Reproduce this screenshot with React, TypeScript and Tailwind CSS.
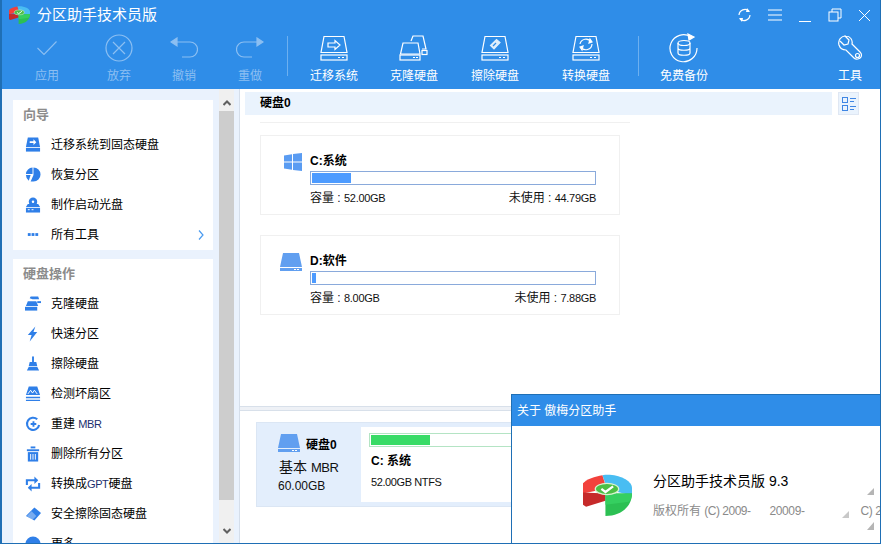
import type { ReactNode } from 'react';

function Drive({ children }: { children?: ReactNode }) {
  return (
    <svg width="28" height="26" viewBox="0 0 28 26" fill="none" stroke="currentColor" strokeWidth="1.2">
      <path d="M4 1.500h20l3 16H1z" />
      <rect x="1" y="20" width="26" height="5" />
      <path d="M18 22.500h2M22 22.500h2" />
      {children}
    </svg>
  );
}

function AppLogo({ size }: { size: number }) {
  return (
    <svg className="shrink-0" width={size} height={size * 0.86} viewBox="0 0 48 41">
      <path d="M19 1C32-1 47 5 48 13v8L24 15z" fill="#49bdf2" />
      <path d="M0 9C3 5 12 2 19 1l4 13L0 19z" fill="#f2413c" />
      <path d="M0 18l22 1v7L3 32l-3-2z" fill="#c62a2a" />
      <path d="M22 19h26c0 12-10 22-26 22z" fill="#2cc053" />
      <path d="M22 19h26c0 3-1 6-3 8l-23 3z" fill="#35cf60" />
      <ellipse cx="23.500" cy="14.500" rx="11.500" ry="5.500" fill="#4cbf45" stroke="#d9f3d0" strokeWidth="1.200" />
      <path d="M18 14.500l4 3 7.500-5.500" fill="none" stroke="#fff" strokeWidth="2.200" />
    </svg>
  );
}

const check = <svg width="20" height="14" viewBox="0 0 20 14" fill="none" stroke="currentColor" strokeWidth="1.1"><path d="M0.500 7l6.500 6.500L19.500 0.500" /></svg>;
const discard = (
  <svg width="28" height="28" viewBox="0 0 28 28" fill="none" stroke="currentColor" strokeWidth="1.2">
    <circle cx="14" cy="14" r="13" />
    <path d="M8 8l12 12M20 8L8 20" />
  </svg>
);
const undo = (
  <svg width="28" height="22" viewBox="0 0 28 22" fill="none" stroke="currentColor" strokeWidth="1.2">
    <path d="M6 5h14a7.500 7.500 0 0 1 0 15H12" />
    <path d="M1 5l6-4v8z" fill="currentColor" />
  </svg>
);
const redo = (
  <svg width="28" height="22" viewBox="0 0 28 22" fill="none" stroke="currentColor" strokeWidth="1.2">
    <path d="M22 5H8a7.500 7.500 0 0 0 0 15h8" />
    <path d="M27 5l-6-4v8z" fill="currentColor" />
  </svg>
);
const migrate = <Drive><path d="M8 8h7V5.500l5 4.500-5 4.500V12H8z" /></Drive>;
const clone = (
  <svg width="30" height="26" viewBox="0 0 30 26" fill="none" stroke="currentColor" strokeWidth="1.2">
    <path d="M12 6l2-5h10l3 13h-4" />
    <path d="M4 8h15l2 11H1.500z" />
    <rect x="1" y="20" width="20" height="5" />
    <path d="M14 22.500h2M17 22.500h2" />
    <rect x="23" y="15.500" width="5" height="4" />
  </svg>
);
const wipe = (
  <Drive>
    <path d="M9.500 10.500l6-6 3.500 3-6 6.500z" fill="currentColor" opacity=".85" />
    <path d="M12 11l3-3" stroke="#2f8de8" />
  </Drive>
);
const convert = (
  <Drive>
    <path d="M8 9a6 6 0 0 1 11-2M20 9a6 6 0 0 1-11 3" />
    <path d="M18 4l2 3-3 1zM10 15l-2-3 3-1z" fill="currentColor" />
  </Drive>
);
const backup = (
  <svg width="30" height="30" viewBox="0 0 30 30" fill="none" stroke="currentColor" strokeWidth="1.2">
    <path d="M22 4A13.500 13.500 0 1 0 28 15" />
    <path d="M19 1l6 3-5 3z" fill="currentColor" />
    <ellipse cx="15" cy="10" rx="6" ry="2.500" />
    <path d="M9 10v10c0 3 12 3 12 0V10M9 15c0 3 12 3 12 0" />
  </svg>
);
const tools = (
  <svg width="26" height="26" viewBox="0 0 26 26" fill="none" stroke="currentColor" strokeWidth="1.2">
    <path d="M9 1a7 7 0 0 0-7 9c1 3 4 5 7 5l8 8c2 2 6 1 7-1 1-2 0-4-1-5l-8-8c1-4-2-8-6-8l-1 0 4 4-1 4-4 1-4-4" />
    <circle cx="20.500" cy="20.500" r="2" />
  </svg>
);

function ToolItem({ icon, label, off, className }: { icon: ReactNode; label: string; off?: boolean; className: string }) {
  return (
    <div className={`flex h-[50px] w-[60px] flex-col items-center justify-between ${off ? 'text-[#8cbff2]' : 'text-white'} ${className}`}>
      <div className="flex h-[30px] items-center">{icon}</div>
      <span className="text-xs leading-[14px] whitespace-nowrap">{label}</span>
    </div>
  );
}

const s = { width: 17, height: 16, viewBox: '0 0 17 16', fill: '#2f7fe8' };
const sideIcons: Record<string, ReactNode> = {
  migrate: <svg {...s}><path d="M3 0h11l2 10H1z" /><rect x="1" y="11" width="15" height="4" /><path d="M5 4h4V2l3 3-3 3V6H5z" fill="#fff" /></svg>,
  restore: <svg {...s}><path d="M9 0a7.500 7.500 0 0 1 0 15H6l3-7z" /><path d="M8 0v7H1a7.500 7.500 0 0 1 7-7zM1 8h5l-2 6a7.500 7.500 0 0 1-3-6z" /></svg>,
  boot: <svg {...s}><circle cx="8.500" cy="4.500" r="4.500" /><circle cx="8.500" cy="4.500" r="1.300" fill="#fff" /><path d="M3 7h11l2 3H1z" /><rect x="1" y="11" width="15" height="5" /><path d="M3 13h2M7 13h2" stroke="#fff" /></svg>,
  dots: <svg {...s}><rect x="3" y="6" width="3" height="3" /><rect x="7" y="6" width="3" height="3" /><rect x="11" y="6" width="3" height="3" /></svg>,
  clone: <svg {...s}><path d="M5 2l1-2h8l1 3H8zM3 5h9l2 5H1z" /><rect x="0" y="11" width="13" height="4" /><rect x="13" y="5" width="4" height="2" /></svg>,
  quick: <svg {...s}><path d="M11 0L3 9h4l-2 7 8-10H9z" /></svg>,
  wipe: <svg {...s}><rect x="7.500" y="0" width="2" height="6" /><path d="M5 6h7l1 4H4zM4 11h9l2 4H2z" /></svg>,
  check: <svg {...s}><path d="M4 0h9l3 9H1zM1 11h15v1.500H1zM1 14h15v1.500H1z" /><path d="M3 8l3-4 2 3 2-3 3 4" fill="none" stroke="#fff" /></svg>,
  rebuild: <svg {...s} fill="none" stroke="#2f7fe8" strokeWidth="2.200"><path d="M13 3A6.500 6.500 0 1 0 15 9" /><path d="M6 8h6M9 5v6" strokeWidth="2" /></svg>,
  trash: <svg {...s}><rect x="2" y="3" width="13" height="2" /><rect x="6" y="0" width="5" height="2" /><path d="M3 6h11v10H3z" /><path d="M6 8v6M8.500 8v6M11 8v6" stroke="#fff" /></svg>,
  gpt: <svg {...s} fill="none" stroke="#2f7fe8" strokeWidth="2.200"><path d="M2 9V4h11M15 7v5H4" /><path d="M10 0l4 4-4 4zM7 8l-4 4 4 4z" fill="#2f7fe8" stroke="none" /></svg>,
  erase: <svg {...s}><path d="M10 1l7 6-7 8-9-5z" /><path d="M2 10l5-5 5 5-4 4z" fill="#fff" opacity=".35" /></svg>,
  more: <svg {...s}><circle cx="8.500" cy="8" r="8" /></svg>,
};

function SideRow({ icon, children, arrow }: { icon: string; children: ReactNode; arrow?: boolean }) {
  return (
    <div className="flex h-[30px] items-center pl-3 text-xs text-black">
      <span className="flex w-4 shrink-0 justify-center">{sideIcons[icon]}</span>
      <span className="ml-[10px] whitespace-nowrap">{children}</span>
      {arrow && (
        <svg className="mr-[9px] ml-auto" width="6" height="10" viewBox="0 0 6 10" fill="none" stroke="#4a9bf0" strokeWidth="1.200">
          <path d="M1 0.500L5 5 1 9.500" />
        </svg>
      )}
    </div>
  );
}

function SectionTitle({ children }: { children: string }) {
  return <div className="flex h-[30px] items-center pl-[10px] text-[13px] font-bold text-[#8c8c8c]">{children}</div>;
}

function Latin({ children }: { children: string }) {
  return <span className="text-[11px] tracking-[-0.3px]">{children}</span>;
}

const winIcon = (
  <svg width="18" height="18" viewBox="0 0 18 18" fill="#5a9cf2">
    <path d="M0 2.500l8-1.200v7.200H0zM9 1.100L18 0v8.500H9zM0 9.500h8v7.200l-8-1.200zM9 9.500h9V18l-9-1.100z" />
  </svg>
);
const driveIcon = (
  <svg width="22" height="18" viewBox="0 0 22 18" fill="#619ff0">
    <path d="M3 0h16l3 14H0z" />
    <rect y="15" width="22" height="3" />
    <path d="M14 16.500h2M17 16.500h2" stroke="#fff" />
  </svg>
);

function DiskCard({ icon, name, cap, free, pct }: { icon: ReactNode; name: string; cap: string; free: string; pct: string }) {
  return (
    <div className="flex h-[80px] w-[360px] border border-[#f0f0f0]">
      <div className="flex w-[49px] shrink-0 justify-end pt-[17px] pr-[8px]">{icon}</div>
      <div className="w-[286px] pt-[17px]">
        <div className="text-xs leading-[16px] font-bold text-black">{name}</div>
        <div className="mt-[2px] h-[14px] border border-[#8aaadb] p-[1px]">
          <div className={`h-full bg-[#4d9bff] ${pct}`} />
        </div>
        <div className="mt-[6px] flex justify-between text-xs leading-[14px] text-[#111]">
          <span>容量 : <Latin>{cap}</Latin></span>
          <span>未使用 : <Latin>{free}</Latin></span>
        </div>
      </div>
    </div>
  );
}

export default function App() {
  return (
    <div className="relative h-[544px] w-[881px] overflow-hidden border-r border-b border-l-2 border-[#1f6fb5] bg-white font-['Liberation_Sans','Noto_Sans_CJK_SC',sans-serif]">
      {/* 顶部标题和工具栏 */}
      <div className="h-[89px] bg-[#2f8de8]">
        <div className="flex h-[30px] items-center pl-[7px] text-white">
          <AppLogo size={21} />
          <span className="ml-[7px] text-[15px]">分区助手技术员版</span>
          <div className="ml-auto flex items-center gap-4 pr-[9px]">
            <svg width="15" height="16" viewBox="0 0 15 16" fill="none" stroke="#fff" strokeWidth="1.200">
              <path d="M2 8a6 6 0 0 1 10-4M13 8a6 6 0 0 1-10 4" />
              <path d="M10 1l3 4-4 0zM5 15l-3-4 4 0z" fill="#fff" stroke="none" />
            </svg>
            <svg width="14" height="12" viewBox="0 0 14 12" stroke="#fff"><path d="M0 1h14M0 6h14M0 11h14" /></svg>
            <svg width="14" height="14" viewBox="0 0 14 14" stroke="#fff"><path d="M1 13.500h12" /></svg>
            <svg width="14" height="14" viewBox="0 0 14 14" fill="none" stroke="#fff"><rect x="1" y="4" width="9" height="9" /><path d="M4 4V1h9v9h-3" /></svg>
            <svg width="13" height="13" viewBox="0 0 13 13" stroke="#fff"><path d="M1 1l11 11M12 1L1 12" /></svg>
          </div>
        </div>
        <div className="flex h-[59px] items-start pt-[3px]">
          <ToolItem off icon={check} label="应用" className="ml-[15px]" />
          <ToolItem off icon={discard} label="放弃" className="ml-3" />
          <ToolItem off icon={undo} label="撤销" className="ml-[5px]" />
          <ToolItem off icon={redo} label="重做" className="ml-[6px]" />
          <div className="mt-[3px] ml-[7px] h-10 w-px bg-[#6db0f0]" />
          <ToolItem icon={migrate} label="迁移系统" className="ml-4" />
          <ToolItem icon={clone} label="克隆硬盘" className="ml-5" />
          <ToolItem icon={wipe} label="擦除硬盘" className="ml-[21px]" />
          <ToolItem icon={convert} label="转换硬盘" className="ml-[31px]" />
          <div className="mt-[3px] ml-[22px] h-10 w-px bg-[#6db0f0]" />
          <ToolItem icon={backup} label="免费备份" className="ml-[15px]" />
          <ToolItem icon={tools} label="工具" className="ml-auto" />
        </div>
      </div>

      <div className="flex h-[454px]">
        {/* 左侧操作栏 */}
        <div className="flex h-full w-[217px] shrink-0 flex-col gap-[9px] overflow-hidden bg-[#eaf2fd] pt-[11px] pl-[11px]">
          <div className="w-[200px] shrink-0 bg-white">
            <SectionTitle>向导</SectionTitle>
            <SideRow icon="migrate">迁移系统到固态硬盘</SideRow>
            <SideRow icon="restore">恢复分区</SideRow>
            <SideRow icon="boot">制作启动光盘</SideRow>
            <SideRow icon="dots" arrow>所有工具</SideRow>
          </div>
          <div className="w-[200px] shrink-0 bg-white">
            <SectionTitle>硬盘操作</SectionTitle>
            <SideRow icon="clone">克隆硬盘</SideRow>
            <SideRow icon="quick">快速分区</SideRow>
            <SideRow icon="wipe">擦除硬盘</SideRow>
            <SideRow icon="check">检测坏扇区</SideRow>
            <SideRow icon="rebuild">重建 <span className="text-[11px] tracking-[-0.4px] text-[#1c2f6e]">MBR</span></SideRow>
            <SideRow icon="trash">删除所有分区</SideRow>
            <SideRow icon="gpt">转换成<span className="text-[11px] tracking-[-0.4px] text-[#1c2f6e]">GPT</span>硬盘</SideRow>
            <SideRow icon="erase">安全擦除固态硬盘</SideRow>
            <SideRow icon="more">更多</SideRow>
          </div>
        </div>

        {/* 滚动条 */}
        <div className="flex h-full w-[15px] shrink-0 flex-col bg-[#f0f0f0]">
          <div className="flex h-[22px] items-end justify-center pb-[5px]">
            <svg width="8" height="6" viewBox="0 0 8 6" fill="none" stroke="#606060" strokeWidth="2"><path d="M0.500 5L4 1.500 7.500 5" /></svg>
          </div>
          <div className="h-[389px] bg-[#cdcdcd]" />
          <div className="flex flex-1 items-end justify-center pb-[9px]">
            <svg width="8" height="6" viewBox="0 0 8 6" fill="none" stroke="#606060" strokeWidth="2"><path d="M0.500 1L4 4.500 7.500 1" /></svg>
          </div>
        </div>
        <div className="h-full w-[6px] shrink-0 border-r border-[#d5deea] bg-[#eaf2fd]" />

        {/* 右侧内容 */}
        <div className="flex min-w-0 flex-1 flex-col">
          <div className="h-[317px] shrink-0">
            <div className="flex items-start pt-[3px] pl-[5px]">
              <div className="flex h-[23px] w-[587px] items-center bg-[#eaf3fd] pb-[2px] pl-[15px] text-xs font-bold text-black">硬盘0</div>
              <div className="ml-[6px] flex h-[23px] w-[21px] items-center justify-center border border-[#dfe7f3] bg-[#eaf3fd]">
                <svg width="14" height="14" viewBox="0 0 14 14" fill="none" stroke="#3f86e4">
                  <rect x="0.500" y="0.500" width="5" height="5" />
                  <rect x="0.500" y="8.500" width="5" height="5" />
                  <path d="M8 1.500h6M8 4.500h4M8 9.500h6M8 12.500h4" />
                </svg>
              </div>
            </div>
            <div className="mt-[7px] ml-5 h-px w-[370px] bg-[#f0f0f0]" />
            <div className="mt-[12px] ml-5 flex flex-col gap-5">
              <DiskCard icon={winIcon} name="C:系统" cap="52.00GB" free="44.79GB" pct="w-[14%]" />
              <DiskCard icon={driveIcon} name="D:软件" cap="8.00GB" free="7.88GB" pct="w-[1.500%]" />
            </div>
          </div>
          <div className="h-[5px] shrink-0 border-y border-[#d8e0ea] bg-[#eef1f6]" />
          <div className="flex-1 pt-[11px] pl-4">
            <div className="flex h-[85px] w-[640px] border border-[#dbe6f4] bg-[#e3eefc] pt-1 pb-1">
              <div className="w-[104px] shrink-0 pt-[6px] pl-[21px] text-[#111]">
                <div className="flex items-center gap-[6px]">
                  {driveIcon}
                  <span className="mt-[4px] text-xs font-bold text-black">硬盘0</span>
                </div>
                <div className="mt-[5px] ml-[1px] text-sm leading-[18px] whitespace-nowrap">基本 <span className="text-[13px] tracking-[-0.5px]">MBR</span></div>
                <div className="text-xs leading-[18px]">60.00GB</div>
              </div>
              <div className="flex-1 bg-white pt-[6px] pl-2">
                <div className="h-[14px] w-[200px] border border-[#b4e4c4] p-[1px]">
                  <div className="h-full w-[30%] bg-[#38db66]" />
                </div>
                <div className="mt-[6px] ml-[2px] text-xs font-bold text-black">C: 系统</div>
                <div className="mt-[6px] ml-[2px] text-[11px] leading-[14px] tracking-[-0.4px] text-[#111]">52.00GB NTFS</div>
              </div>
            </div>
          </div>
        </div>
      </div>

      {/* 关于对话框 */}
      <div className="absolute top-[394px] left-[509px] h-[150px] w-[372px] border-t border-l border-[#1f6fb5] bg-white">
        <div className="flex h-[31px] items-center bg-[#2f8de8] pt-px pl-[5px] text-xs text-white">关于 傲梅分区助手</div>
        <div className="flex pt-[48px] pl-[71px]">
          <AppLogo size={49} />
          <div className="mt-[-2px] ml-[21px]">
            <div className="text-sm leading-[18px] text-black">分区助手技术员版 9.3</div>
            <div className="mt-[14px] text-xs leading-[14px] whitespace-nowrap text-[#8a8a8a]">
              版权所有 <span className="tracking-[-0.5px]">(C) 2009-</span><span className="ml-[19px] tracking-[-0.4px]">20009-</span><span className="ml-[56px] tracking-[-0.4px]">C) 2</span>
            </div>
          </div>
        </div>
        <svg className="absolute top-[93px] left-[355px]" width="7" height="7" viewBox="0 0 7 7" fill="#b5b5b5"><path d="M0 7l7-7v7z" /></svg>
        <svg className="absolute top-[116px] left-[330px]" width="7" height="7" viewBox="0 0 7 7" fill="#c8c8c8"><path d="M0 7l7-7v7z" /></svg>
        <svg className="absolute top-[127px] left-[355px]" width="7" height="8" viewBox="0 0 7 8" fill="#b5b5b5"><path d="M0 8l7-8v8z" /></svg>
      </div>
    </div>
  );
}
